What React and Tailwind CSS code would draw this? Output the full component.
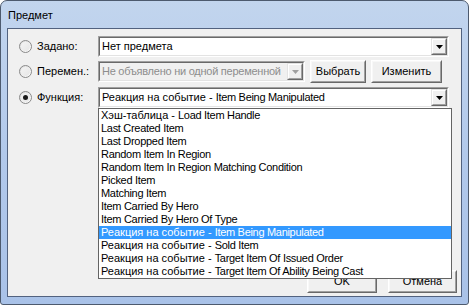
import React from "react";

function Arrow({ disabled }) {
  return (
    <div className="w-[16px] h-[17px] border border-t-[#e3e3e3] border-l-[#e3e3e3] border-r-[#696969] border-b-[#696969]">
      <div className="w-full h-full border border-t-white border-l-white border-r-[#a0a0a0] border-b-[#a0a0a0] bg-[#f0f0f0] flex items-center justify-center">
        <svg width="7" height="4" viewBox="0 0 7 4">
          <polygon points="0,0 7,0 3.5,4" fill={disabled ? "#a0a0a0" : "#000"} />
        </svg>
      </div>
    </div>
  );
}

function Radio({ checked }) {
  return (
    <div className="w-[13px] h-[13px] rounded-full border border-[#8a8a8a] bg-gradient-to-br from-[#dcdcdc] to-white flex items-center justify-center shrink-0">
      <div className="w-[9px] h-[9px] rounded-full bg-gradient-to-br from-[#f4f4f4] to-[#e6e6e6] flex items-center justify-center">
        {checked && <div className="w-[5px] h-[5px] rounded-full bg-[#1a1a1a]" />}
      </div>
    </div>
  );
}

function Button({ children, className }) {
  return (
    <div className={"h-[23px] border border-t-white border-l-white border-r-[#696969] border-b-[#696969] " + className}>
      <div className="w-full h-full border border-t-[#f8f8f8] border-l-[#f8f8f8] border-r-[#a0a0a0] border-b-[#a0a0a0] bg-[#f0f0f0] flex items-center justify-center text-[11px] text-black">
        {children}
      </div>
    </div>
  );
}

function Label({ text }) {
  const idx = text.indexOf(" - ");
  if (idx >= 0) {
    return (
      <>
        <span>{text.slice(0, idx + 3)}</span>
        <span className="tracking-[-0.3px]">{text.slice(idx + 3)}</span>
      </>
    );
  }
  return <span className="tracking-[-0.3px]">{text}</span>;
}

const items = [
  "Хэш-таблица - Load Item Handle",
  "Last Created Item",
  "Last Dropped Item",
  "Random Item In Region",
  "Random Item In Region Matching Condition",
  "Picked Item",
  "Matching Item",
  "Item Carried By Hero",
  "Item Carried By Hero Of Type",
  "Реакция на событие - Item Being Manipulated",
  "Реакция на событие - Sold Item",
  "Реакция на событие - Target Item Of Issued Order",
  "Реакция на событие - Target Item Of Ability Being Cast",
];

export default function App() {
  return (
    <div className="w-[469px] h-[305px] bg-white font-['Liberation_Sans',Arial,sans-serif] text-[11px] text-black">
      <div className="w-[469px] h-[305px] rounded-t-[7px] rounded-b-[3px] border border-[#4d5a6e] bg-gradient-to-b from-[#c2d5ee] via-[#b2c9eb] to-[#a9c2e8] flex flex-col px-[6px] pb-[7px]">
        <div className="h-[27px] flex items-center pl-[1px] pt-[1px] text-[11px] text-black">Предмет</div>
        <div className="flex-1 border border-[#52627f] bg-[#f0f0f0] flex flex-col">
          <div className="flex flex-col pt-[7px] pl-[11px] pr-[12px]">
            {/* Row 1 */}
            <div className="flex items-center h-[21px]">
              <Radio />
              <span className="ml-[5px] w-[61px]">Задано:</span>
              <div className="w-[351px] h-[21px] border border-t-[#a0a0a0] border-l-[#a0a0a0] border-r-white border-b-white">
                <div className="w-full h-full border border-t-[#696969] border-l-[#696969] border-r-[#e3e3e3] border-b-[#e3e3e3] bg-white flex items-center">
                  <span className="flex-1 pl-[2px]">Нет предмета</span>
                  <Arrow />
                </div>
              </div>
            </div>
            {/* Row 2 */}
            <div className="flex items-center h-[21px] mt-[4px]">
              <Radio />
              <span className="ml-[5px] w-[61px]">Перемен.:</span>
              <div className="w-[207px] h-[21px] border border-t-[#a0a0a0] border-l-[#a0a0a0] border-r-white border-b-white">
                <div className="w-full h-full border border-t-[#696969] border-l-[#696969] border-r-[#e3e3e3] border-b-[#e3e3e3] bg-[#f0f0f0] flex items-center">
                  <span className="flex-1 pl-[2px] text-[#8d8d8d] whitespace-nowrap overflow-hidden tracking-[-0.25px]">Не объявлено ни одной переменной</span>
                  <Arrow disabled />
                </div>
              </div>
              <Button className="w-[56px] ml-[5px]">Выбрать</Button>
              <Button className="w-[71px] ml-[5px]">Изменить</Button>
            </div>
            {/* Row 3 */}
            <div className="flex items-center h-[21px] mt-[5px]">
              <Radio checked />
              <span className="ml-[5px] w-[61px]">Функция:</span>
              <div className="relative w-[351px] h-[21px]">
                <div className="w-full h-full border border-t-[#a0a0a0] border-l-[#a0a0a0] border-r-white border-b-white">
                  <div className="w-full h-full border border-t-[#696969] border-l-[#696969] border-r-[#e3e3e3] border-b-[#e3e3e3] bg-white flex items-center">
                    <span className="flex-1 pl-[2px] whitespace-nowrap">
                      <Label text="Реакция на событие - Item Being Manipulated" />
                    </span>
                    <Arrow />
                  </div>
                </div>
                <div className="absolute left-0 top-full w-[354px] border border-[#646464] bg-white z-10">
                  {items.map((t, i) => (
                    <div
                      key={i}
                      className={
                        "h-[13px] leading-[13px] pl-[2px] whitespace-nowrap " +
                        (i === 9 ? "bg-[#3399ff] text-white" : "")
                      }
                    >
                      <Label text={t} />
                    </div>
                  ))}
                </div>
              </div>
            </div>
          </div>
          <div className="mt-auto flex justify-end pr-[4px] pb-[3px]">
            <Button className="w-[70px]">OK</Button>
            <Button className="w-[69px] ml-[11px]">Отмена</Button>
          </div>
        </div>
      </div>
    </div>
  );
}
